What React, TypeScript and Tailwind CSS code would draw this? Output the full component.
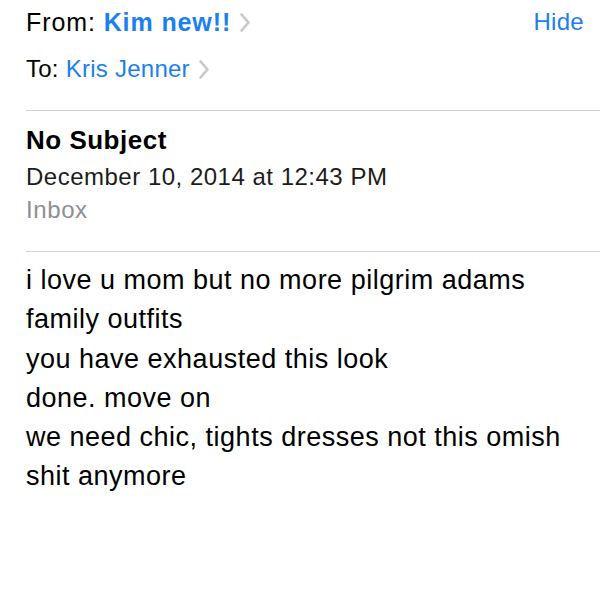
import React from "react";

function Chevron() {
  return (
    <svg width="12" height="21" viewBox="0 0 12 21" className="ml-[8px] shrink-0">
      <path d="M2.5 2.5l7 8l-7 8" fill="none" stroke="#c7c7cc" strokeWidth="2.6" strokeLinecap="round" strokeLinejoin="round" />
    </svg>
  );
}

const body = [
  "i love u mom but no more pilgrim adams",
  "family outfits",
  "you have exhausted this look",
  "done. move on",
  "we need chic, tights dresses not this omish",
  "shit anymore",
];

export default function App() {
  return (
    <div
      className="min-h-[600px] w-[600px] bg-white text-black"
      style={{ fontFamily: '"Liberation Sans", Arial, sans-serif' }}
    >
      <div className="pl-[26px] pt-[6px]">
        <div className="flex items-center justify-between pr-[16px] text-[25px] leading-[32px]">
          <div className="flex items-center tracking-[0.9px]">
            <span>From:&nbsp;</span>
            <span className="font-bold text-[#1b7ff0]">Kim new!!</span>
            <Chevron />
          </div>
          <span className="text-[24px] tracking-[0.3px] text-[#1b7ff0]">Hide</span>
        </div>
        <div className="mt-[15px] flex items-center text-[24px] leading-[32px] tracking-[0.25px]">
          <span>To:&nbsp;</span>
          <span className="text-[#1b7ff0]">Kris Jenner</span>
          <Chevron />
        </div>

        <div className="mt-[25px] h-px bg-[#d1d1d6]" />

        <div className="mt-[13px] text-[26px] font-bold leading-[32px] tracking-[0.5px]">No Subject</div>
        <div className="mt-[5px] text-[24px] leading-[32px] tracking-[0.5px] text-[#1c1c1c]">
          December 10, 2014 at 12:43 PM
        </div>
        <div className="mt-[1px] text-[24px] leading-[32px] tracking-[0.6px] text-[#8e8e93]">Inbox</div>

        <div className="mt-[25px] h-px bg-[#d1d1d6]" />

        <div className="mt-[9px] text-[27px] leading-[39.3px] tracking-[0.5px]">
          {body.map((line) => (
            <div key={line}>{line}</div>
          ))}
        </div>
      </div>
    </div>
  );
}
